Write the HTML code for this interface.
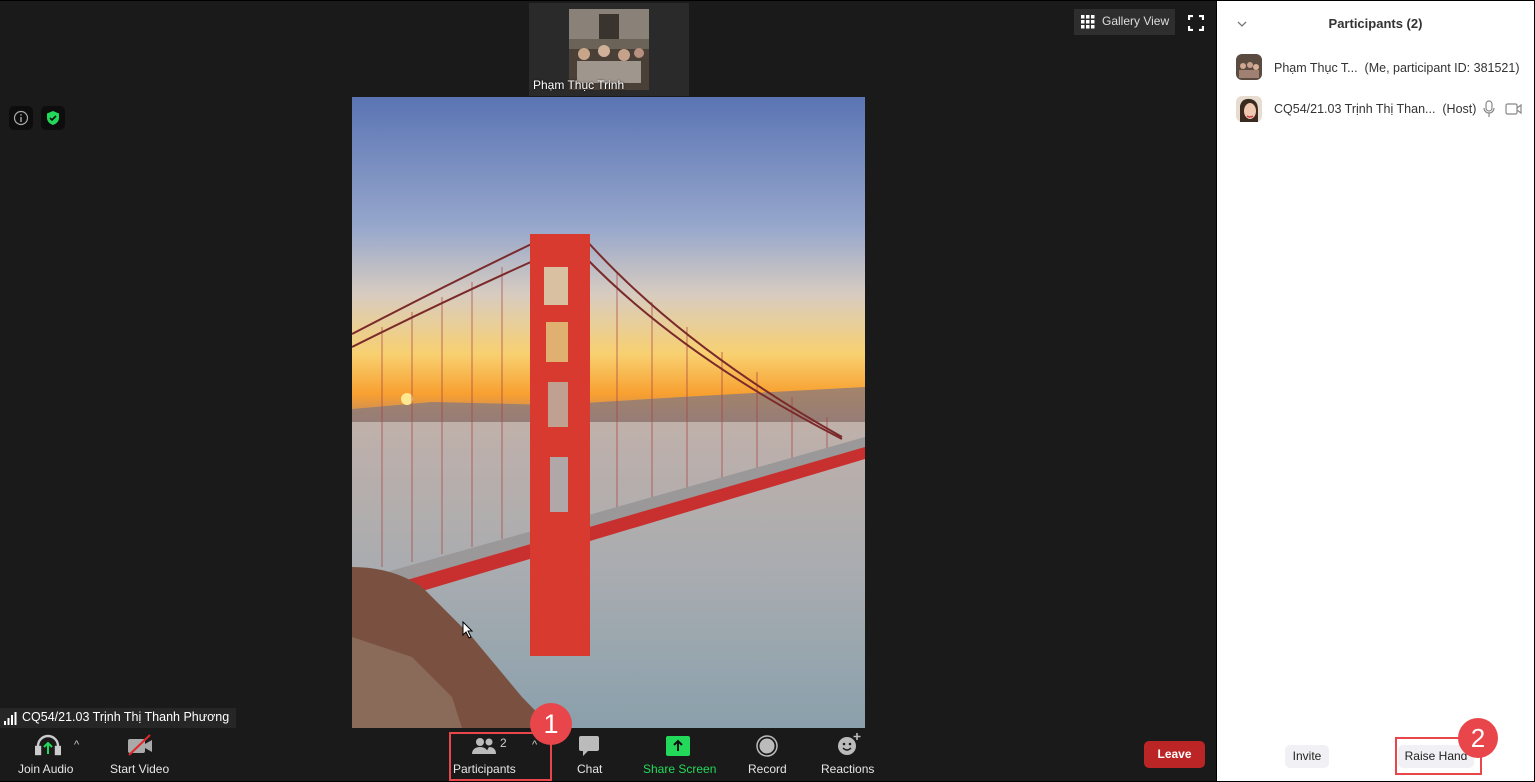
<!DOCTYPE html>
<html><head><meta charset="utf-8"><style>
*{margin:0;padding:0;box-sizing:border-box}
body{width:1535px;height:782px;overflow:hidden;background:#000;font-family:"Liberation Sans","Noto Sans CJK SC",sans-serif;position:relative}
.main{position:absolute;left:0;top:1px;width:1216px;height:780px;background:#1a1a1a}
.panel{position:absolute;left:1217px;top:1px;width:317px;height:780px;background:#fff}
.t{position:absolute;color:#fff;white-space:nowrap}
.lbl{position:absolute;top:761px;font-size:12px;color:#e6e6e6;white-space:nowrap}
</style></head><body>
<div class="main">
  <div style="position:absolute;left:529px;top:2px;width:160px;height:93px;background:#2a2a2a"></div>
  <svg style="position:absolute;left:569px;top:8px" width="80" height="81">
    <rect width="80" height="81" fill="#6b6258"/>
    <rect x="0" y="0" width="80" height="30" fill="#8a8278"/>
    <rect x="30" y="5" width="20" height="25" fill="#3a342e"/>
    <rect x="0" y="40" width="80" height="41" fill="#4a4038"/>
    <circle cx="15" cy="45" r="6" fill="#c9a58a"/><circle cx="35" cy="42" r="6" fill="#d1b09a"/><circle cx="55" cy="46" r="6" fill="#c7a28a"/><circle cx="70" cy="44" r="5" fill="#b89080"/>
    <rect x="8" y="52" width="64" height="22" fill="#d8d0c8" opacity=".6"/>
  </svg>
  <div class="t" style="left:533px;top:77px;font-size:12px;text-shadow:0 0 2px #000">Phạm Thục Trinh</div>
  <div style="position:absolute;left:9px;top:105px;width:24px;height:24px;border-radius:5px;background:#0d0d0d"></div>
  <svg style="position:absolute;left:13px;top:109px" width="16" height="16"><circle cx="8" cy="8" r="6.5" fill="none" stroke="#aaa" stroke-width="1.2"/><rect x="7.3" y="7" width="1.4" height="5" fill="#aaa"/><rect x="7.3" y="4.2" width="1.4" height="1.4" fill="#aaa"/></svg>
  <div style="position:absolute;left:41px;top:105px;width:24px;height:24px;border-radius:5px;background:#0d0d0d"></div>
  <svg style="position:absolute;left:45px;top:109px" width="16" height="16"><path d="M8 1 L14 3.5 V8 C14 11.5 11 14 8 15 C5 14 2 11.5 2 8 V3.5Z" fill="#23d959"/><path d="M5 8 L7 10 L11 6" fill="none" stroke="#0d0d0d" stroke-width="1.6"/></svg>
  <div style="position:absolute;left:1074px;top:8px;width:101px;height:26px;background:#2e2e2e"></div>
  <svg style="position:absolute;left:1081px;top:14px" width="14" height="14" fill="#fff"><rect x="0" y="0" width="3.5" height="3.5"/><rect x="5" y="0" width="3.5" height="3.5"/><rect x="10" y="0" width="3.5" height="3.5"/><rect x="0" y="5" width="3.5" height="3.5"/><rect x="5" y="5" width="3.5" height="3.5"/><rect x="10" y="5" width="3.5" height="3.5"/><rect x="0" y="10" width="3.5" height="3.5"/><rect x="5" y="10" width="3.5" height="3.5"/><rect x="10" y="10" width="3.5" height="3.5"/></svg>
  <div class="t" style="left:1102px;top:13px;font-size:12px;color:#ddd">Gallery View</div>
  <svg style="position:absolute;left:1188px;top:14px" width="16" height="16" fill="none" stroke="#fff" stroke-width="2.2"><path d="M1 5V1H5M11 1H15V5M15 11V15H11M5 15H1V11"/></svg>
  <svg style="position:absolute;left:352px;top:96px" width="513" height="631">
    <defs>
      <linearGradient id="sky" x1="0" y1="0" x2="0" y2="330" gradientUnits="userSpaceOnUse"><stop offset="0" stop-color="#5a74b4"/><stop offset=".4" stop-color="#98a8cc"/><stop offset=".6" stop-color="#d8ccc0"/><stop offset=".78" stop-color="#f8d070"/><stop offset=".9" stop-color="#f8a030"/><stop offset="1" stop-color="#b08070"/></linearGradient>
      <linearGradient id="wat" x1="0" y1="0" x2="0" y2="1"><stop offset="0" stop-color="#c0b0aa"/><stop offset=".5" stop-color="#a8acb0"/><stop offset="1" stop-color="#8aa0ac"/></linearGradient>
    </defs>
    <rect width="513" height="631" fill="url(#sky)"/>
    <path d="M0 312 L80 305 L200 308 L330 300 L420 295 L513 290 L513 330 L0 330Z" fill="#8c7a7a" opacity=".8"/>
    <rect y="325" width="513" height="306" fill="url(#wat)"/>
    <circle cx="55" cy="302" r="6" fill="#ffe890"/>
    <g stroke="#a84040" stroke-width="1" opacity=".7">
      <path d="M30 230V470M60 215V465M90 200V457M120 185V450M150 170V442M265 175V420M300 205V410M335 230V400M370 255V390M405 275V378M440 300V368M475 320V358"/>
    </g>
    <path d="M0 237 Q100 185 190 142 M0 250 Q100 200 190 160 M233 142 Q330 250 490 340 M233 160 Q330 260 490 342" stroke="#7a2a2a" stroke-width="2" fill="none"/>
    <path d="M10 482 L513 340 L513 352 L10 500Z" fill="#9a9898"/>
    <path d="M10 496 L513 350 L513 362 L10 512Z" fill="#c83030"/>
    <rect x="178" y="137" width="60" height="422" fill="#d83a30"/>
    <rect x="192" y="170" width="24" height="38" fill="#d8c0a0"/>
    <rect x="194" y="225" width="22" height="40" fill="#e0b070"/>
    <rect x="196" y="285" width="20" height="45" fill="#c0a090"/>
    <rect x="198" y="360" width="18" height="55" fill="#b0a8a8"/>
    <path d="M0 470 Q40 470 70 490 L120 540 L170 600 L200 631 L0 631Z" fill="#7a5040"/>
    <path d="M0 540 L60 560 L100 600 L110 631 L0 631Z" fill="#8a6a58"/>
  </svg>
  <svg style="position:absolute;left:462px;top:620px" width="12" height="18"><path d="M1 1 L1 14 L4 11 L7 17 L9 16 L6 10 L10 10Z" fill="#fff" stroke="#000" stroke-width="1"/></svg>
  <div style="position:absolute;left:0;top:707px;width:236px;height:20px;background:#262626"></div>
  <svg style="position:absolute;left:4px;top:711px" width="14" height="13" fill="#fff"><rect x="0" y="9" width="2" height="4"/><rect x="3.5" y="6" width="2" height="7"/><rect x="7" y="3" width="2" height="10"/><rect x="10.5" y="0" width="2" height="13"/></svg>
  <div class="t" style="left:22px;top:709px;font-size:12.5px">CQ54/21.03 Trịnh Thị Thanh Phương</div>
  <svg style="position:absolute;left:35px;top:733px" width="26" height="22" fill="none" stroke="#ccc" stroke-width="2.4"><path d="M3 17V12a10 10 0 0 1 20 0v5"/><rect x="1" y="13" width="4" height="7" fill="#ccc"/><rect x="21" y="13" width="4" height="7" fill="#ccc"/><path d="M13 20V10M9 13l4-4 4 4" stroke="#23d959" stroke-width="2"/></svg>
  <div class="t" style="left:74px;top:738px;font-size:11px;color:#ccc">^</div>
  <svg style="position:absolute;left:126px;top:733px" width="28" height="22"><rect x="2" y="5" width="17" height="14" rx="2" fill="#aaa"/><path d="M19 10l7-4v12l-7-4z" fill="#aaa"/><path d="M3 21L24 1" stroke="#e02828" stroke-width="2"/></svg>
  <div class="lbl" style="left:18px">Join Audio</div>
  <div class="lbl" style="left:110px">Start Video</div>
  <svg style="position:absolute;left:471px;top:736px" width="26" height="18" fill="#bbb"><circle cx="9" cy="5" r="4"/><path d="M1 17c0-5 4-7 8-7s8 2 8 7z"/><circle cx="18" cy="5" r="3.5"/><path d="M14 17h11c0-5-3-7-7-7z"/></svg>
  <div class="t" style="left:500px;top:735px;font-size:12px;color:#ccc">2</div>
  <div class="t" style="left:532px;top:738px;font-size:11px;color:#ccc">^</div>
  <div class="lbl" style="left:453px">Participants</div>
  <div style="position:absolute;left:449px;top:731px;width:103px;height:49px;border:2px solid #e8464a"></div>
  <div style="position:absolute;left:530px;top:702px;width:42px;height:42px;border-radius:50%;background:#e8464a;color:#fff;font-size:27px;text-align:center;line-height:42px">1</div>
  <svg style="position:absolute;left:578px;top:734px" width="22" height="22"><path d="M3 1h16a2 2 0 0 1 2 2v11a2 2 0 0 1-2 2H10l-5 5v-5H3a2 2 0 0 1-2-2V3a2 2 0 0 1 2-2z" fill="#bbb"/></svg>
  <div class="lbl" style="left:577px">Chat</div>
  <svg style="position:absolute;left:666px;top:735px" width="24" height="20"><rect width="24" height="20" rx="2" fill="#23d959"/><path d="M12 15V5M8 9l4-4 4 4" stroke="#111" stroke-width="2" fill="none"/></svg>
  <div class="lbl" style="left:643px;color:#23d959">Share Screen</div>
  <svg style="position:absolute;left:756px;top:734px" width="22" height="22"><circle cx="11" cy="11" r="10" fill="none" stroke="#bbb" stroke-width="1.5"/><circle cx="11" cy="11" r="7.5" fill="#bbb"/></svg>
  <div class="lbl" style="left:748px">Record</div>
  <svg style="position:absolute;left:836px;top:731px" width="26" height="24"><circle cx="11" cy="14" r="9" fill="#bbb"/><circle cx="8" cy="12" r="1.3" fill="#1a1a1a"/><circle cx="14" cy="12" r="1.3" fill="#1a1a1a"/><path d="M7 16q4 4 8 0" stroke="#1a1a1a" stroke-width="1.4" fill="none"/><path d="M21 1v7M17.5 4.5h7" stroke="#bbb" stroke-width="1.6"/></svg>
  <div class="lbl" style="left:821px">Reactions</div>
  <div style="position:absolute;left:1144px;top:740px;width:61px;height:27px;border-radius:5px;background:#bb2525;color:#fff;font-weight:bold;font-size:12px;text-align:center;line-height:27px">Leave</div>
</div>
<div class="panel">
  <svg style="position:absolute;left:20px;top:19px" width="10" height="8"><path d="M1 2l4 4 4-4" stroke="#777" stroke-width="1.3" fill="none"/></svg>
  <div style="position:absolute;left:0;width:317px;top:15px;text-align:center;font-size:13px;font-weight:bold;color:#333">Participants (2)</div>
  <svg style="position:absolute;left:19px;top:53px" width="26" height="26"><rect width="26" height="26" rx="6" fill="#5a4a40"/><circle cx="7" cy="12" r="3" fill="#d0a890"/><circle cx="14" cy="11" r="3" fill="#c8a090"/><circle cx="20" cy="13" r="3" fill="#d8b098"/><rect x="3" y="16" width="20" height="8" fill="#a08070"/></svg>
  <div style="position:absolute;left:57px;top:60px;font-size:12.5px;color:#333;white-space:nowrap">Phạm Thục T...&nbsp; (Me, participant ID: 381521)</div>
  <svg style="position:absolute;left:19px;top:95px" width="26" height="26"><rect width="26" height="26" rx="6" fill="#e8dcd0"/><path d="M4 26V10Q6 2 14 3Q22 4 22 14V26Z" fill="#3a2a20"/><ellipse cx="14" cy="15" rx="6" ry="8" fill="#f0c8b0"/><path d="M11 20q3 2 6 0" stroke="#d04050" stroke-width="1.5" fill="none"/></svg>
  <div style="position:absolute;left:57px;top:101px;font-size:12.5px;color:#333;white-space:nowrap">CQ54/21.03 Trịnh Thị Than...&nbsp; (Host)</div>
  <svg style="position:absolute;left:266px;top:99px" width="12" height="18" fill="none" stroke="#888" stroke-width="1.2"><rect x="3" y="1" width="6" height="10" rx="3"/><path d="M1 8a5 5 0 0 0 10 0M6 13v4"/></svg>
  <svg style="position:absolute;left:288px;top:102px" width="17" height="12" fill="none" stroke="#888" stroke-width="1.2"><rect x="1" y="1" width="11" height="10" rx="1.5"/><path d="M12 5l4-3v8l-4-3"/></svg>
  <div style="position:absolute;left:68px;top:744px;width:44px;height:23px;border-radius:5px;background:#f0f0f5;font-size:12px;color:#222;text-align:center;line-height:23px">Invite</div>
  <div style="position:absolute;left:181px;top:744px;width:76px;height:23px;border-radius:5px;background:#f0f0f5;font-size:12px;color:#222;text-align:center;line-height:23px">Raise Hand</div>
  <div style="position:absolute;left:178px;top:736px;width:87px;height:38px;border:2px solid #e8464a"></div>
  <div style="position:absolute;left:241px;top:717px;width:40px;height:40px;border-radius:50%;background:#e8464a;color:#fff;font-size:26px;text-align:center;line-height:40px">2</div>
</div>
</body></html>
